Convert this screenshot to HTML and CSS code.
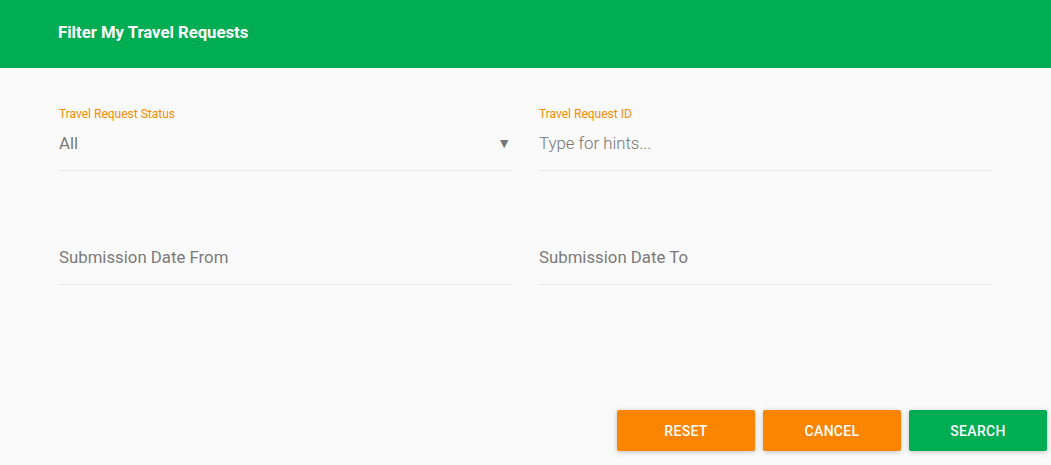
FILE: index.html
```html
<!DOCTYPE html>
<html lang="en">
<head>
  <meta charset="UTF-8" />
  <title>Filter My Travel Requests</title>
  <link rel="stylesheet" href="styles.css">
</head>
<body>
  <div class="dialog">
    <header class="dialog-title">Filter My Travel Requests</header>

    <div class="dialog-body">
      <div class="field-grid">
        <div class="field">
          <label class="field-label">Travel Request Status</label>
          <div class="field-value select">
            <span>All</span>
            <span class="arrow">&#9660;</span>
          </div>
        </div>

        <div class="field">
          <label class="field-label">Travel Request ID</label>
          <div class="field-value">
            <input type="text" placeholder="Type for hints...">
          </div>
        </div>

        <div class="field">
          <label class="field-label"></label>
          <div class="field-value">
            <span>Submission Date From</span>
          </div>
        </div>

        <div class="field">
          <label class="field-label"></label>
          <div class="field-value">
            <span>Submission Date To</span>
          </div>
        </div>
      </div>
    </div>

    <div class="dialog-actions">
      <button class="btn btn-orange">Reset</button>
      <button class="btn btn-orange">Cancel</button>
      <button class="btn btn-green">Search</button>
    </div>
  </div>
</body>
</html>
```

FILE: styles.css
```css
html, body {
  margin: 0;
  height: 100%;
}

body {
  background: #fafafa;
  font-family: Roboto, "Liberation Sans", Arial, sans-serif;
}

.dialog {
  display: flex;
  flex-direction: column;
  height: 465px;
}

.dialog-title {
  background: #00ad52;
  color: #ffffff;
  font-size: 16.7px;
  font-weight: 700;
  height: 68px;
  line-height: 65px;
  padding-left: 58px;
  box-sizing: border-box;
}

.dialog-body {
  flex: 1;
  padding: 38px 59px 0 59px;
}

.field-grid {
  display: grid;
  grid-template-columns: 453px 453px;
  column-gap: 27px;
  row-gap: 49px;
}

.field {
  height: 65px;
  border-bottom: 1px solid #e8e8e8;
  box-sizing: border-box;
}

.field-label {
  display: block;
  height: 16px;
  line-height: 16px;
  font-size: 12px;
  color: #fb8c00;
}

.field-value {
  margin-top: 9px;
  height: 24px;
  line-height: 24px;
  font-size: 16.8px;
  color: #7a7a7a;
  display: flex;
  align-items: center;
  justify-content: space-between;
}

.field-value input {
  border: none;
  outline: none;
  background: transparent;
  padding: 0;
  width: 100%;
  font-family: inherit;
  font-size: 16.8px;
  color: #333;
}

.field-value input::placeholder {
  color: #757575;
  font-weight: 300;
}

.arrow {
  font-size: 14px;
  color: #757575;
  margin-right: 1px;
}

.dialog-actions {
  display: flex;
  justify-content: flex-end;
  gap: 8px;
  padding: 0 4px 14px 0;
}

.btn {
  width: 138px;
  height: 41px;
  border: none;
  border-radius: 2px;
  color: #ffffff;
  font-family: inherit;
  font-size: 14px;
  font-weight: 500;
  text-transform: uppercase;
  letter-spacing: 0.3px;
  box-shadow: 0 1px 6px rgba(0, 0, 0, 0.12), 0 1px 4px rgba(0, 0, 0, 0.12);
  cursor: pointer;
}

.btn-orange {
  background: #fb8500;
}

.btn-green {
  background: #00ad52;
}
```
